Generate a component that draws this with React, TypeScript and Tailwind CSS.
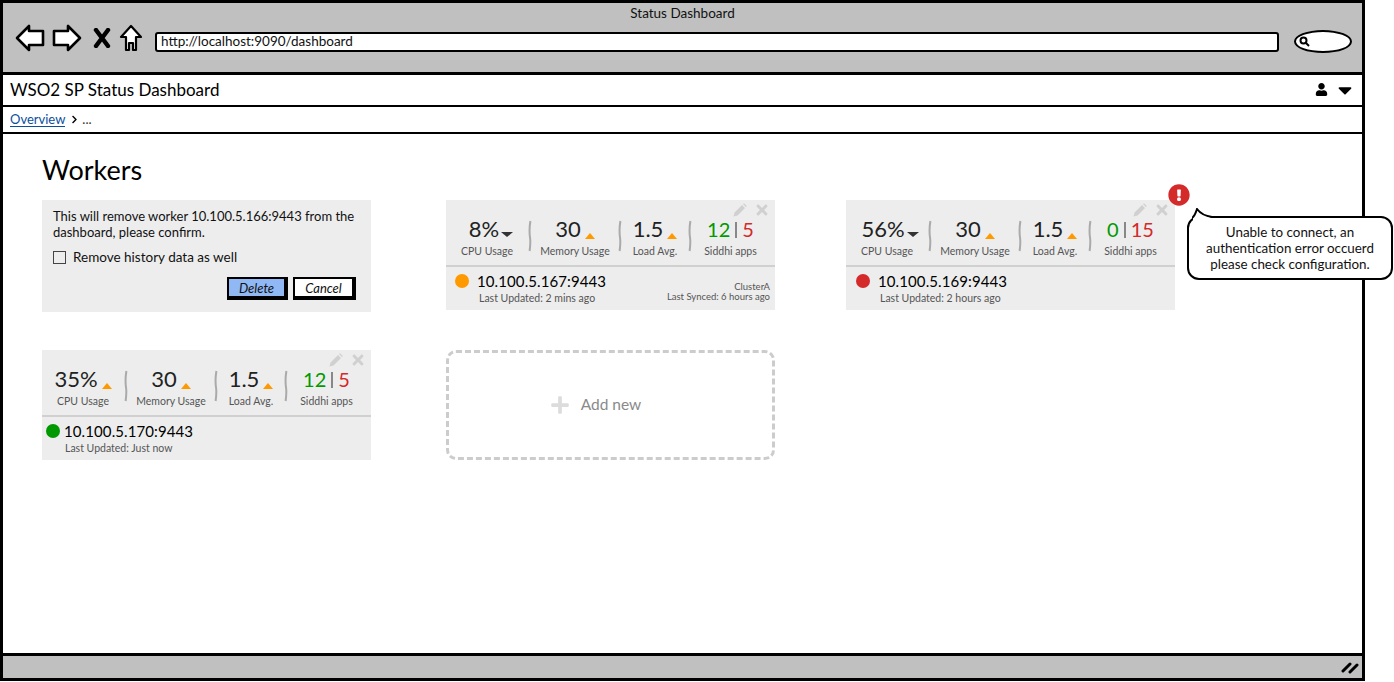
import React from "react"
import { FaCaretDown, FaChevronRight, FaExclamationCircle, FaPlus, FaTimes, FaUser } from "react-icons/fa"

const Divider = () => (
    <svg width="4" height="32" viewBox="0 0 4 32" className="-mt-[2px] shrink-0">
        <path d="M2.4 1 C1 9 1.4 14 2.2 19 C2.6 24 2 28 1.6 31" stroke="#aaa" strokeWidth="2" fill="none" />
    </svg>
)

const Pencil = () => (
    <svg width="14" height="14" viewBox="0 0 14 14">
        <path d="M0.5 13.5 L1.5 9.5 L9 2 L12 5 L4.5 12.5 Z M10 1 L11 0.2 L13.8 3 L13 4 Z" fill="currentColor" />
    </svg>
)

const Up = () => <span className="mb-[3px] ml-[4px] h-0 w-0 border-x-[5px] border-b-[6px] border-x-transparent border-b-[#ff9900]" />

const Down = () => <span className="mb-[5px] ml-[2px] h-0 w-0 border-x-[6px] border-t-[5px] border-x-transparent border-t-[#333]" />

const Stat = ({ value, label, width, marker, shift }) => (
    <div className={`${width} flex shrink-0 flex-col items-center`}>
        <div className={`${shift} flex h-[26px] items-end text-[22px] leading-[26px] text-[#222]`}>
            <span>{value}</span>
            {marker === "down" ? <Down /> : <Up />}
        </div>
        <div className="mt-[2px] text-[10.5px] leading-[14px] text-[#555]">{label}</div>
    </div>
)

const WorkerCard = ({ cpu, cpuMarker, cpuShift, good, bad, dot, dotPad, dotGap, subPad, ip, updated, cluster, synced }) => (
    <div className="relative h-[110px] w-[329px] bg-[#ededed]">
        <div className="absolute right-[5px] top-[2px] flex items-center gap-[7px] text-[#d0d0d0]">
            <Pencil />
            <FaTimes size={16} />
        </div>
        <div className="flex h-[67px] items-center border-b-2 border-[#d0d0d0] pt-[8px]">
            <Stat value={cpu} label="CPU Usage" width="w-[82px]" marker={cpuMarker} shift={cpuShift} />
            <Divider />
            <Stat value="30" label="Memory Usage" width="w-[86px]" />
            <Divider />
            <Stat value="1.5" label="Load Avg." width="w-[66px]" />
            <Divider />
            <div className="flex w-[77px] shrink-0 flex-col items-center">
                <div className="flex h-[26px] items-end text-[20px] leading-[26px]">
                    <span className="text-[#009900]">{good}</span>
                    <span className="mx-[5px] mb-[4px] h-[16px] w-[2px] bg-[#888]" />
                    <span className="text-[#d42a2a]">{bad}</span>
                </div>
                <div className="mt-[2px] text-[10.5px] leading-[14px] text-[#555]">Siddhi apps</div>
            </div>
        </div>
        <div className="flex items-start justify-between pr-[5px] pt-[3px]">
            <div className={`${dotPad} flex flex-col`}>
                <div className="flex items-center">
                    <span className={`${dot} ${dotGap} h-[14px] w-[14px] rounded-full`} />
                    <span className="text-[15px] leading-[22px] tracking-[0.1px] text-black">{ip}</span>
                </div>
                <div className={`${subPad} text-[10.5px] leading-[12px] text-[#555]`}>{updated}</div>
            </div>
            {cluster && (
                <div className="pt-[12px] text-right text-[9.5px] leading-[10px] text-[#555]">
                    <div>{cluster}</div>
                    <div>{synced}</div>
                </div>
            )}
        </div>
    </div>
)

const ConfirmCard = () => (
    <div className="h-[112px] w-[329px] bg-[#ededed] pl-[11px] pt-[8px] text-[13px] text-[#111]">
        <p className="w-[310px] leading-[16px]">This will remove worker 10.100.5.166:9443 from the dashboard, please confirm.</p>
        <label className="mt-[9px] flex items-center gap-[7px] text-[13.5px] leading-[16px]">
            <span className="h-[13px] w-[13px] border border-[#444] bg-[#ededed]" />
            Remove history data as well
        </label>
        <div className="mt-[12px] flex justify-end gap-[5px] pr-[15px] italic">
            <button className="h-[23px] w-[61px] border-2 border-b-[4px] border-r-[4px] border-black bg-[#8fb8f5]">Delete</button>
            <button className="h-[23px] w-[63px] border-2 border-b-[4px] border-r-[4px] border-black bg-white">Cancel</button>
        </div>
    </div>
)

const App = () => {
    return (
        <div className="relative h-[682px] w-[1394px] overflow-hidden bg-white font-['Lato',sans-serif] text-black">
            <div className="flex h-[681px] w-[1365px] flex-col border-[3px] border-black">
                <div className="h-[69px] shrink-0 bg-[#c0c0c0] pt-[2px]">
                    <div className="text-center text-[13.5px] leading-[16px] text-[#111]">Status Dashboard</div>
                    <div className="mt-[9px] flex items-center pl-[12px]">
                        <svg width="30" height="28" viewBox="0 0 30 28" className="-mt-[8px]">
                            <path d="M2 14 L14 2 L14 7 L28 7 L28 21 L14 21 L14 26 Z" fill="white" stroke="black" strokeWidth="2.6" strokeLinejoin="round" />
                        </svg>
                        <svg width="30" height="28" viewBox="0 0 30 28" className="-mt-[8px] ml-[7px]">
                            <path d="M28 14 L16 2 L16 7 L2 7 L2 21 L16 21 L16 26 Z" fill="white" stroke="black" strokeWidth="2.6" strokeLinejoin="round" />
                        </svg>
                        <svg width="18" height="20" viewBox="0 0 18 20" className="-mt-[8px] ml-[11px]">
                            <path d="M3 2 L15 18 M15 2 L3 18" stroke="black" strokeWidth="4.4" strokeLinecap="round" />
                        </svg>
                        <svg width="24" height="28" viewBox="0 0 24 28" className="-mt-[8px] ml-[8px]">
                            <path d="M12 2 L22 13 L17 13 L17 26 L14 26 L14 19 L10 19 L10 26 L7 26 L7 13 L2 13 Z" fill="white" stroke="black" strokeWidth="2.2" strokeLinejoin="round" />
                        </svg>
                        <div className="ml-[12px] flex h-[20px] w-[1124px] items-center rounded-[3px] border-2 border-black bg-white pl-[4px] text-[13.5px] text-[#111]">
                            http://localhost:9090/dashboard
                        </div>
                        <div className="ml-[15px] flex h-[23px] w-[58px] items-center rounded-[50%] border-2 border-black bg-white pl-[3px]">
                            <svg width="11" height="11" viewBox="0 0 11 11">
                                <circle cx="4.5" cy="4.5" r="3" fill="none" stroke="black" strokeWidth="2" />
                                <path d="M7 7 L10 10" stroke="black" strokeWidth="2" />
                            </svg>
                        </div>
                    </div>
                </div>
                <nav className="flex h-[35px] shrink-0 items-center justify-between border-b-[2px] border-t-[3px] border-black bg-white pb-[1px] pl-[7px] pr-[6px]">
                    <span className="text-[17px] text-black">WSO2 SP Status Dashboard</span>
                    <div className="flex items-center gap-[6px]">
                        <FaUser size={13} />
                        <FaCaretDown size={22} className="-my-2" />
                    </div>
                </nav>
                <div className="flex h-[27px] shrink-0 items-center border-b-[2px] border-black pl-[7px] text-[13px]">
                    <a className="border-b border-[#0b4f9e] leading-[14px] text-[#0b4f9e]">Overview</a>
                    <FaChevronRight size={9} className="ml-[5px]" />
                    <span className="ml-[3px] text-[#333]">...</span>
                </div>
                <main className="min-h-0 flex-1 px-[39px] pt-[19px]">
                    <h1 className="text-[27px] font-normal leading-[34px] text-black">Workers</h1>
                    <div className="mt-[13px] flex items-start">
                        <ConfirmCard />
                        <div className="ml-[75px]">
                            <WorkerCard cpu="8%" cpuMarker="down" cpuShift="ml-[8px]" good="12" bad="5" dot="bg-[#ff9900]" dotPad="pl-[9px]" dotGap="mr-[8px]" subPad="ml-[24px]" ip="10.100.5.167:9443" updated="Last Updated: 2 mins ago" cluster="ClusterA" synced="Last Synced: 6 hours ago" />
                        </div>
                        <div className="ml-[71px]">
                            <WorkerCard cpu="56%" cpuMarker="down" cpuShift="ml-[6px]" good="0" bad="15" dot="bg-[#d42a2a]" dotPad="pl-[10px]" dotGap="mr-[8px]" subPad="ml-[24px]" ip="10.100.5.169:9443" updated="Last Updated: 2 hours ago" />
                        </div>
                    </div>
                    <div className="mt-[38px] flex items-start">
                        <WorkerCard cpu="35%" cpuShift="ml-0" good="12" bad="5" dot="bg-[#009900]" dotPad="pl-[4px]" dotGap="mr-[4px]" subPad="ml-[19px]" ip="10.100.5.170:9443" updated="Last Updated: Just now" />
                        <div className="ml-[75px] flex h-[110px] w-[329px] items-center justify-center gap-[11px] rounded-[10px] border-[3px] border-dashed border-[#cccccc] pr-[30px] text-[15.5px] text-[#8a8a8a]">
                            <FaPlus size={20} className="text-[#dcdcdc]" />
                            Add new
                        </div>
                    </div>
                </main>
                <div className="flex h-[25px] shrink-0 items-center justify-end border-t-[3px] border-black bg-[#c0c0c0] pr-[3px]">
                    <svg width="18" height="14" viewBox="0 0 18 14">
                        <path d="M2 11 L9 4 M9 12 L16 5" stroke="black" strokeWidth="3" strokeLinecap="round" />
                    </svg>
                </div>
            </div>
            <FaExclamationCircle size={22} className="absolute left-[1168px] top-[184px] text-[#d42a2a]" />
            <div className="absolute left-[1187px] top-[216px] flex h-[64px] w-[206px] items-center justify-center rounded-[12px] border-2 border-black bg-white text-center text-[13.4px] leading-[16px] text-[#111]">
                <p>
                    Unable to connect, an
                    <br />
                    authentication error occuerd
                    <br />
                    please check configuration.
                </p>
            </div>
            <svg width="26" height="14" viewBox="0 0 26 14" className="absolute left-[1192px] top-[208px]">
                <path d="M1 10 C3 8 4 4 5 1 C8 5 13 8 20 10 L20 14 L1 14 Z" fill="white" stroke="none" />
                <path d="M0 10 C3 8 4 4 5 1 C8 5 13 8 20 9" fill="none" stroke="black" strokeWidth="2" />
            </svg>
        </div>
    )
}

export default App
